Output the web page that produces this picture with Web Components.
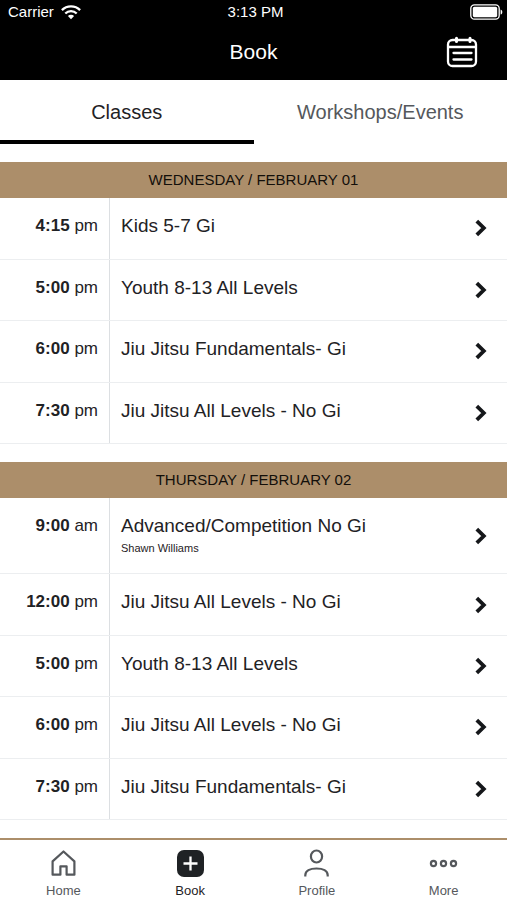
<!DOCTYPE html>
<html lang="en">
<head>
<meta charset="utf-8">
<meta name="viewport" content="width=device-width, initial-scale=1">
<title>Book</title>
<style>
  :root {
    --ink: #1f2225;
    --muted: #55585c;
    --line: #eceef0;
    --rule: #dcdfe2;
    --brand: #ac8e6a;
  }

  body {
    margin: 0;
    min-height: 100vh;
    display: flex;
    flex-direction: column;
    background: #fff;
    color: var(--ink);
    font-family: "Liberation Sans", Arial, sans-serif;
  }

  main {
    flex: 1;
    display: flex;
    flex-direction: column;
    gap: 18px;
    padding-block: 18px;
  }
</style>
</head>
<body>

<header>
  <status-bar carrier="Carrier" time="3:13 PM"></status-bar>
  <title-bar>Book</title-bar>
</header>

<tab-strip>
  <tab-item selected>Classes</tab-item>
  <tab-item>Workshops/Events</tab-item>
</tab-strip>

<main>
  <day-group label="WEDNESDAY / FEBRUARY 01">
    <class-row time="4:15" period="pm">Kids 5-7 Gi</class-row>
    <class-row time="5:00" period="pm">Youth 8-13 All Levels</class-row>
    <class-row time="6:00" period="pm">Jiu Jitsu Fundamentals- Gi</class-row>
    <class-row time="7:30" period="pm">Jiu Jitsu All Levels - No Gi</class-row>
  </day-group>

  <day-group label="THURSDAY / FEBRUARY 02">
    <class-row time="9:00" period="am" coach="Shawn Williams">Advanced/Competition No Gi</class-row>
    <class-row time="12:00" period="pm">Jiu Jitsu All Levels - No Gi</class-row>
    <class-row time="5:00" period="pm">Youth 8-13 All Levels</class-row>
    <class-row time="6:00" period="pm">Jiu Jitsu All Levels - No Gi</class-row>
    <class-row time="7:30" period="pm">Jiu Jitsu Fundamentals- Gi</class-row>
  </day-group>
</main>

<bottom-nav>
  <nav-item href="#home" icon="home">Home</nav-item>
  <nav-item href="#book" icon="book" current>Book</nav-item>
  <nav-item href="#profile" icon="profile">Profile</nav-item>
  <nav-item href="#more" icon="more">More</nav-item>
</bottom-nav>

<script>
  // Shared base: clones a template into an open shadow root
  class BaseElement extends HTMLElement {
    constructor() {
      super()
      const template = document.createElement('template')
      template.innerHTML = this.constructor.markup
      this.attachShadow({ mode: 'open' }).appendChild(template.content.cloneNode(true))
    }

    $(selector) {
      return this.shadowRoot.querySelector(selector)
    }
  }

  /* ---------- <status-bar> ---------- */

  class StatusBar extends BaseElement {
    static markup = /* html */ `
      <style>
        :host {
          display: grid;
          grid-template-columns: 1fr auto 1fr;
          align-items: center;
          height: 24px;
          padding-inline: 8px 4px;
          background: #000;
          color: #fff;
          font-size: 15px;
          line-height: 24px;
        }
        .left { display: flex; align-items: center; gap: 7px; }
        .battery { justify-self: end; }
        svg { display: block; }
      </style>
      <span class="left">
        <span class="carrier"></span>
        <svg width="20" height="16" viewBox="0 0 20 16" fill="none" stroke="#fff" stroke-width="2.3" aria-hidden="true">
          <path d="M.9 6.1a12.8 12.8 0 0 1 18.2 0M4.3 9.5a8 8 0 0 1 11.4 0"/>
          <path d="M10 15.2 6.9 12a4.4 4.4 0 0 1 6.2 0Z" fill="#fff" stroke="none"/>
        </svg>
      </span>
      <span class="time"></span>
      <svg class="battery" width="33" height="16" viewBox="0 0 33 16" fill="none" aria-hidden="true">
        <rect x=".8" y=".8" width="28.4" height="14.4" rx="3.6" stroke="#fff" stroke-width="1.3"/>
        <rect x="2.8" y="2.8" width="24.4" height="10.4" rx="1.6" fill="#fff"/>
        <path d="M30.6 5.4c2.3.8 2.3 4.4 0 5.2Z" fill="#fff"/>
      </svg>
    `

    connectedCallback() {
      this.$('.carrier').textContent = this.getAttribute('carrier')
      this.$('.time').textContent = this.getAttribute('time')
    }
  }

  /* ---------- <title-bar> ---------- */

  class TitleBar extends BaseElement {
    static markup = /* html */ `
      <style>
        :host {
          display: grid;
          grid-template-columns: 1fr auto 1fr;
          align-items: center;
          height: 56px;
          padding-inline: 28px;
          background: #000;
          color: #fff;
        }
        h1 {
          grid-column: 2;
          margin: 0;
          font-size: 21px;
          font-weight: 400;
          line-height: 24px;
        }
        button {
          justify-self: end;
          padding: 0;
          border: 0;
          background: none;
          color: inherit;
          cursor: pointer;
        }
        svg { display: block; }
      </style>
      <h1><slot></slot></h1>
      <button type="button" aria-label="Open calendar">
        <svg width="34" height="32" viewBox="0 0 34 32" fill="none" stroke="currentColor" stroke-width="2.3" stroke-linecap="round">
          <rect x="3" y="4" width="28" height="26" rx="4.5"/>
          <path d="M3.5 11h27"/>
          <path d="M11.5 2.2v3.4M25 2.2v3.4" stroke-width="3"/>
          <path d="M8.5 17h18M8.5 23.500h18"/>
        </svg>
      </button>
    `
  }

  /* ---------- <tab-strip> / <tab-item> ---------- */

  class TabStrip extends BaseElement {
    static markup = /* html */ `
      <style>
        :host { display: block; }
        nav { display: flex; }
      </style>
      <nav aria-label="Schedule type"><slot></slot></nav>
    `

    connectedCallback() {
      this.addEventListener('click', e => {
        const picked = e.target.closest('tab-item')
        if (!picked) return
        this.querySelectorAll('tab-item').forEach(tab => {
          tab.toggleAttribute('selected', tab === picked)
        })
      })
    }
  }

  class TabItem extends BaseElement {
    static observedAttributes = ['selected']

    static markup = /* html */ `
      <style>
        :host { display: block; flex: 1 1 0; }
        button {
          width: 100%;
          height: 64px;
          padding: 4px 0 0;
          border: 0;
          border-bottom: 4px solid transparent;
          background: none;
          color: var(--muted);
          font: inherit;
          font-size: 20px;
          line-height: 24px;
          cursor: pointer;
        }
        :host([selected]) button {
          border-bottom-color: #000;
          color: var(--ink);
        }
      </style>
      <button type="button"><slot></slot></button>
    `

    attributeChangedCallback() {
      this.$('button').setAttribute('aria-pressed', this.hasAttribute('selected'))
    }
  }

  /* ---------- <day-group> ---------- */

  class DayGroup extends BaseElement {
    // Groups and their rows share out any spare height of the screen
    static markup = /* html */ `
      <style>
        :host, section, .rows {
          display: flex;
          flex-direction: column;
          flex: 1 0 auto;
        }
        h2 {
          margin: 0;
          background: var(--brand);
          color: #130f0a;
          font-size: 15px;
          font-weight: 400;
          line-height: 36px;
          text-align: center;
        }
      </style>
      <section>
        <h2></h2>
        <div class="rows" role="list"><slot></slot></div>
      </section>
    `

    connectedCallback() {
      this.$('h2').textContent = this.getAttribute('label')
    }
  }

  /* ---------- <class-row> ---------- */

  class ClassRow extends BaseElement {
    static markup = /* html */ `
      <style>
        :host { display: flex; flex: 1 0 auto; }
        a {
          flex: 1;
          display: flex;
          border-bottom: 1px solid var(--line);
          color: inherit;
          text-decoration: none;
          line-height: 24px;
        }
        .when {
          flex: none;
          box-sizing: border-box;
          width: 110px;
          padding: 16px 11px 20px 0;
          border-right: 1px solid var(--rule);
          font-size: 17px;
          text-align: right;
        }
        .what {
          flex: 1;
          padding: 16px 11px 15px;
          font-size: 19px;
        }
        .coach {
          display: block;
          font-size: 11px;
          line-height: 20px;
        }
        .coach:empty { display: none; }
        svg {
          flex: none;
          align-self: center;
          margin-right: 19px;
        }
      </style>
      <a href="#class">
        <span class="when"><b></b> <span class="period"></span></span>
        <span class="what"><slot></slot><span class="coach"></span></span>
        <svg width="14" height="18" viewBox="0 0 14 18" fill="none" stroke="#15171a" stroke-width="3.8" aria-hidden="true">
          <path d="m2.8 2.2 7 6.8-7 6.8"/>
        </svg>
      </a>
    `

    connectedCallback() {
      this.setAttribute('role', 'listitem')
      this.$('b').textContent = this.getAttribute('time')
      this.$('.period').textContent = this.getAttribute('period')
      this.$('.coach').textContent = this.getAttribute('coach') ?? ''
    }
  }

  /* ---------- <bottom-nav> / <nav-item> ---------- */

  class BottomNav extends BaseElement {
    static markup = /* html */ `
      <style>
        :host {
          display: block;
          position: sticky;
          bottom: 0;
          border-top: 2px solid var(--brand);
          background: #fff;
        }
        nav { display: flex; }
      </style>
      <nav aria-label="Main"><slot></slot></nav>
    `
  }

  const icons = {
    home: `<path d="M4.6 12.4 15.500 2.500l10.900 9.900v13.300h-7.800v-8.400h-6.200v8.400H4.600Z" stroke-linejoin="round"/>`,
    book: `<rect x="2" y="1" width="27" height="27" rx="7" fill="currentColor" stroke="none"/>
           <path d="M15.500 7.500v14M8.500 14.500h14" stroke="#fff" stroke-width="2.3"/>`,
    profile: `<ellipse cx="15.500" cy="7.500" rx="5.600" ry="6"/>
              <path d="M4.300 27.500v-1.200c0-4.400 4.600-6.800 11.200-6.800s11.200 2.400 11.200 6.800v1.200"/>`,
    more: `<circle cx="5.500" cy="14.500" r="2.600"/><circle cx="15.500" cy="14.500" r="2.600"/><circle cx="25.500" cy="14.500" r="2.600"/>`,
  }

  class NavItem extends BaseElement {
    static markup = /* html */ `
      <style>
        :host { display: block; flex: 1 1 0; }
        a {
          display: flex;
          flex-direction: column;
          align-items: center;
          gap: 5px;
          padding: 9px 0 1px;
          color: var(--muted);
          font-size: 13px;
          line-height: 16px;
          text-decoration: none;
        }
        a[aria-current] { color: var(--ink); }
        svg { display: block; }
      </style>
      <a>
        <svg width="31" height="29" viewBox="0 0 31 29" fill="none" stroke="currentColor" stroke-width="2.2" aria-hidden="true"></svg>
        <slot></slot>
      </a>
    `

    connectedCallback() {
      const link = this.$('a')
      link.href = this.getAttribute('href')
      if (this.hasAttribute('current')) link.setAttribute('aria-current', 'page')
      this.$('svg').innerHTML = icons[this.getAttribute('icon')]
    }
  }

  customElements.define('status-bar', StatusBar)
  customElements.define('title-bar', TitleBar)
  customElements.define('tab-strip', TabStrip)
  customElements.define('tab-item', TabItem)
  customElements.define('day-group', DayGroup)
  customElements.define('class-row', ClassRow)
  customElements.define('bottom-nav', BottomNav)
  customElements.define('nav-item', NavItem)
</script>
</body>
</html>
